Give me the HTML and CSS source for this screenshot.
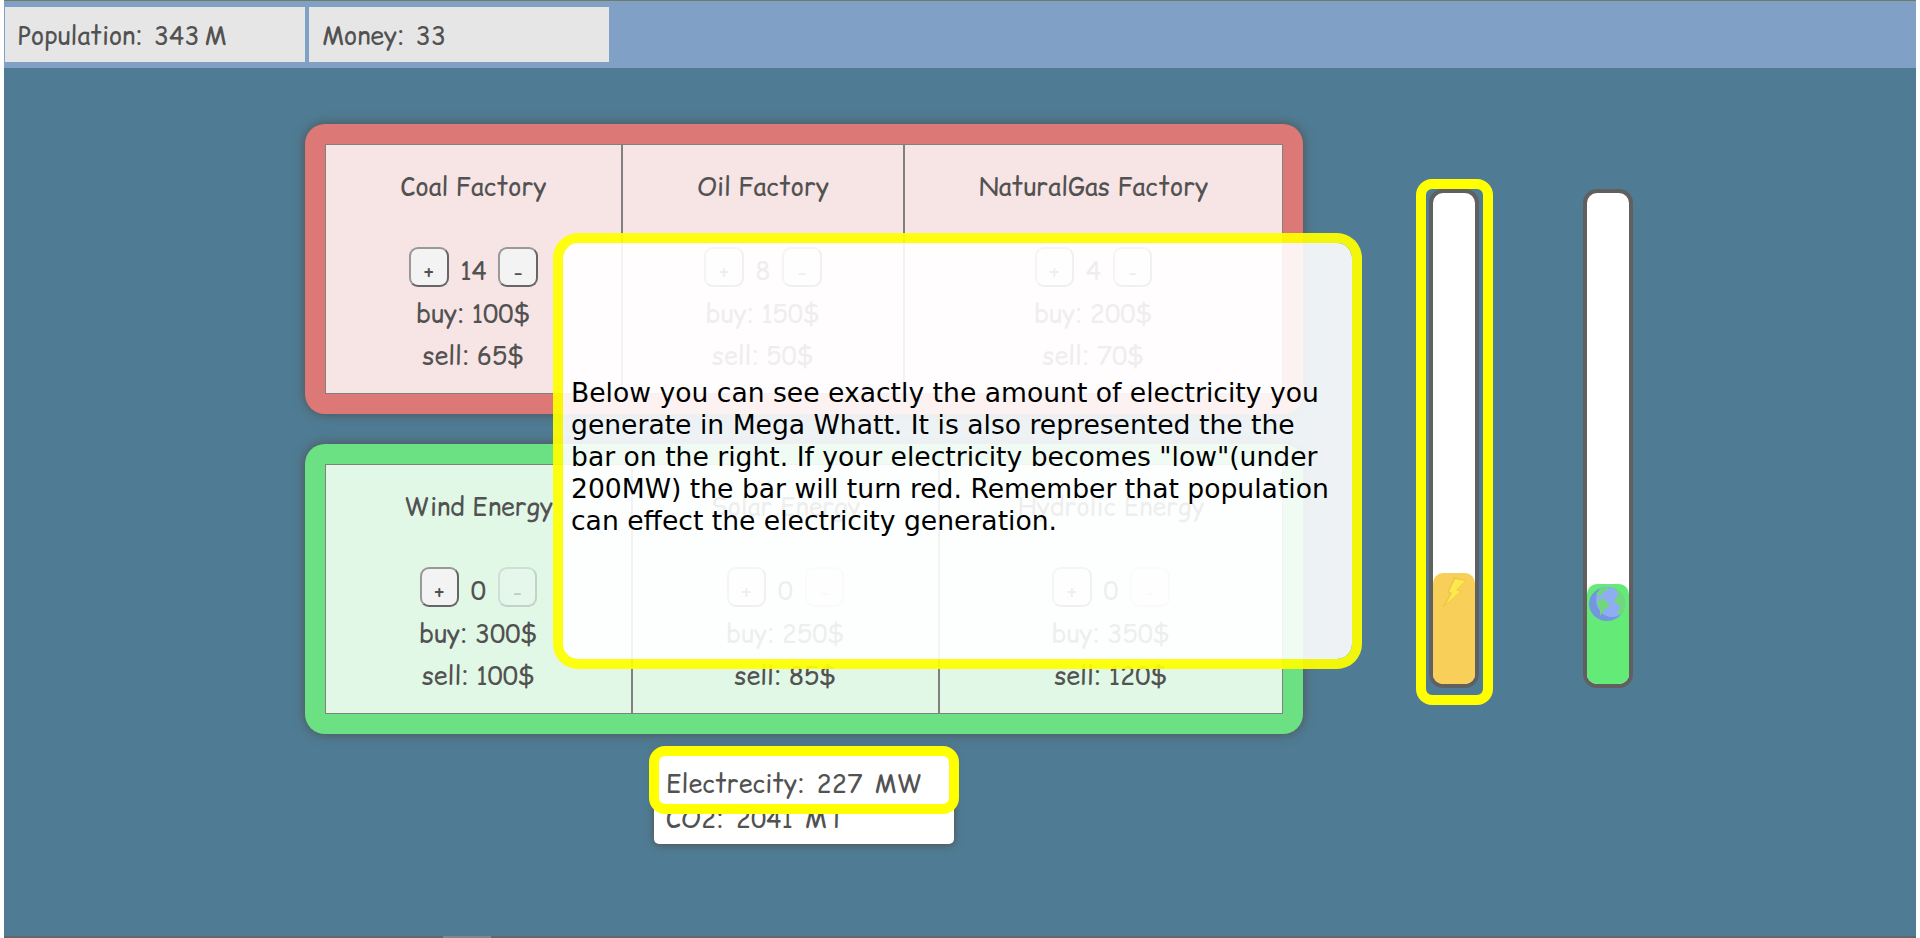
FILE: index.html
```html
<!DOCTYPE html>
<html lang="en">
<head>
<meta charset="utf-8">
<title>Energy Game</title>
<link rel="stylesheet" href="styles.css">
</head>
<body>
<div class="game">
  <header class="topbar">
    <div class="stat">Population:<span class="num">343</span><span class="unit">M</span></div>
    <div class="stat money">Money:<span class="num">33</span></div>
  </header>
  <main class="stage">
    <section class="plants">
      <div class="panel fossil">
        <article class="plant">
          <h2>Coal Factory</h2>
          <div class="counter"><button>+</button><span>14</span><button>-</button></div>
          <p>buy: 100$</p><p>sell: 65$</p>
        </article>
        <article class="plant">
          <h2>Oil Factory</h2>
          <div class="counter"><button>+</button><span>8</span><button>-</button></div>
          <p>buy: 150$</p><p>sell: 50$</p>
        </article>
        <article class="plant">
          <h2>NaturalGas Factory</h2>
          <div class="counter"><button>+</button><span>4</span><button>-</button></div>
          <p>buy: 200$</p><p>sell: 70$</p>
        </article>
      </div>
      <div class="panel green">
        <article class="plant">
          <h2>Wind Energy</h2>
          <div class="counter"><button>+</button><span>0</span><button class="off">-</button></div>
          <p>buy: 300$</p><p>sell: 100$</p>
        </article>
        <article class="plant">
          <h2>Solar Energy</h2>
          <div class="counter"><button>+</button><span>0</span><button class="off">-</button></div>
          <p>buy: 250$</p><p>sell: 85$</p>
        </article>
        <article class="plant">
          <h2>Hydrolic Energy</h2>
          <div class="counter"><button>+</button><span>0</span><button class="off">-</button></div>
          <p>buy: 350$</p><p>sell: 120$</p>
        </article>
      </div>
      <div class="readout">
        <div class="electricity">Electrecity:<span class="value">227</span><span class="value-unit">MW</span></div>
        <div class="co2">CO2:<span class="value">2041</span><span class="value-unit">MT</span></div>
        <div class="ring ring-readout"></div>
      </div>
    </section>
    <section class="gauges">
      <div class="gauge power">
        <div class="fill">
          <svg class="bolt" viewBox="0 0 24 32"><path d="M12 0 24 3.500 15.500 12.500 20 14 0 31 8 17 5.500 15Z" fill="#f1c34b"/><path d="M13 2 23 4 14 13 18.500 14.500 4 27 10 16 7 14.500Z" fill="#fce94c"/></svg>
        </div>
        <div class="ring ring-gauge"></div>
      </div>
      <div class="gauge eco">
        <div class="fill">
          <svg class="globe" viewBox="0 0 36 34"><defs><clipPath id="disc"><ellipse cx="18" cy="17" rx="18" ry="17"/></clipPath></defs><g clip-path="url(#disc)"><rect width="36" height="34" fill="#7396dc"/><ellipse cx="23" cy="13" rx="16" ry="17" fill="#8fadf3"/><path d="M7 7 12 1 19 1 19 4 15 4 13 8 10 9ZM10 12 15 12 20 17 20 20 15 23 11 29 11 22 8 17ZM26 3 31 1 37 10 37 25 31 28 28 25 31 21 30 18 26 16 26 11 30 8Z" fill="#70d77e"/></g></svg>
        </div>
      </div>
    </section>
  </main>
  <div class="hint"><p>Below you can see exactly the amount of electricity you generate in Mega Whatt. It is also represented the the bar on the right. If your electricity becomes "low"(under 200MW) the bar will turn red. Remember that population can effect the electricity generation.</p></div>
  <footer class="edge"><div class="thumb"></div></footer>
</div>
</body>
</html>
```
FILE: styles.css
```css
* { box-sizing: border-box; }
body {
  margin: 0;
  background: #fff;
  color: #525252;
  font: 25px/42px "Comic Relief", "Comic Sans MS", cursive;
}
h2, p { margin: 0; font-weight: 400; font-size: inherit; }
.game {
  position: relative;
  display: flex;
  flex-direction: column;
  height: 938px;
  margin: 0 4px;
  overflow: hidden;
  background: #4f7c94;
  border-top: 1px solid #6f7c60;
}
.topbar {
  display: flex;
  gap: 4px;
  height: 67px;
  padding: 6px 1px;
  background: #80a1c5;
}
.stat {
  display: flex;
  width: 300px;
  height: 55px;
  padding: 8px 13px;
  background: #e6e6e6;
}
.num { margin-left: 11px; }
.unit { margin-left: 5px; }
.stage { display: flex; flex: 1; padding: 56px 0 0 301px; }
.plants { display: flex; flex-direction: column; gap: 30px; width: 998px; }
.panel {
  display: grid;
  height: 290px;
  padding: 20px;
  border-radius: 20px;
  box-shadow: 0 0 12px #505050;
}
.fossil { grid-template-columns: 297px 282px 379px; background: #dc7977; }
.green { grid-template-columns: 307px 307px 344px; background: #6be183; }
.plant {
  display: flex;
  flex-direction: column;
  align-items: center;
  padding-top: 21px;
  border: 1px solid #808080;
}
.fossil .plant { background: #f7e4e4; }
.green .plant { background: #e1f8e7; }
.counter {
  display: flex;
  align-items: center;
  gap: 11.5px;
  height: 42px;
  margin: 38px 0 5px;
}
.counter span { padding-top: 8px; }
.counter button {
  width: 39.5px;
  height: 40px;
  padding: 9px 0 0;
  border: 2px solid #666;
  border-top-color: #999;
  border-left-color: #999;
  border-radius: 9px;
  background: #f3f3f3;
  color: #505050;
  font: 22px/24px "Comic Relief", "Comic Sans MS", cursive;
}
.counter .off { opacity: .25; }
.readout {
  position: relative;
  width: 300px;
  height: 94px;
  margin: -14px 0 0 349px;
  padding: 16px 0 0 12px;
  border-radius: 5px;
  background: #fff;
  box-shadow: 0 1px 9px #505050;
  line-height: 35px;
}
.value { margin-left: 12px; }
.value-unit { margin-left: 12px; }
.ring { position: absolute; border: 10px solid #ff0; border-radius: 16px; }
.ring-readout { left: -5px; top: -4px; width: 310px; height: 68px; }
.gauges { display: flex; gap: 104px; margin: 65px 0 0 126px; }
.gauge {
  position: relative;
  display: flex;
  align-items: flex-end;
  width: 50px;
  height: 499px;
  border: 4px solid #606060;
  border-radius: 14px;
  background: #fff;
}
.fill { display: flex; justify-content: center; width: 100%; border-radius: 10px; }
.power .fill { height: 111px; background: #f8cf58; }
.eco .fill { height: 100px; background: #64eb77; }
.bolt { width: 24px; height: 32px; margin-top: 4px; }
.globe { width: 36px; height: 34px; margin: 3px 2px 0 0; }
.ring-gauge { left: -17px; top: -14px; width: 77px; height: 526px; }
.hint {
  position: absolute;
  left: 549px;
  top: 232px;
  display: flex;
  align-items: center;
  width: 809px;
  height: 436px;
  padding: 11px 9px 0 8px;
  border: 10px solid rgba(255, 255, 0, .93);
  border-radius: 25px;
  background: rgba(255, 255, 255, .9) padding-box;
  color: #000;
  font: 26.6px/32px "DejaVu Sans", sans-serif;
}
.edge { height: 2px; background: #666; }
.thumb { width: 48px; height: 2px; margin-left: 439px; background: #858585; }
```
